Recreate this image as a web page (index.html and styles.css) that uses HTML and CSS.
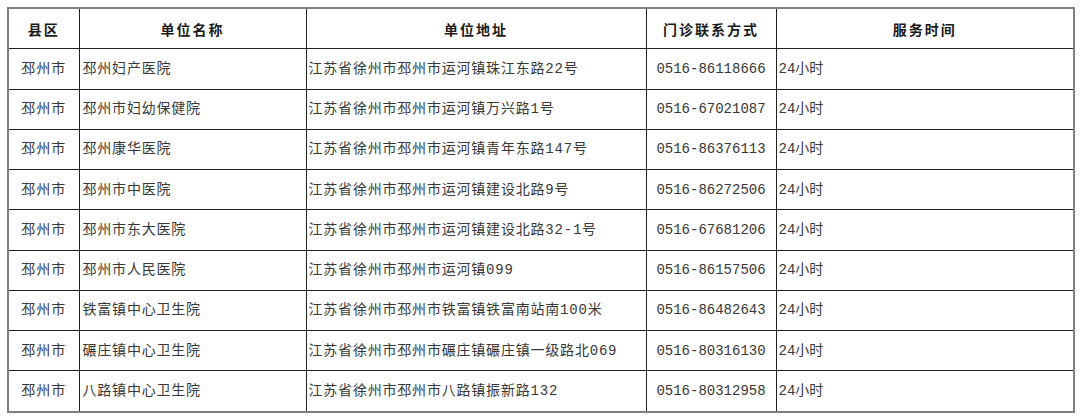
FILE: index.html
```html
<!DOCTYPE html>
<html lang="zh-CN">
<head>
<meta charset="utf-8">
<link rel="stylesheet" href="styles.css">
</head>
<body>
<table class="grid">
  <colgroup>
    <col class="c-county"><col class="c-name"><col class="c-addr"><col class="c-phone"><col class="c-time">
  </colgroup>
  <thead>
    <tr><th>县区</th><th>单位名称</th><th>单位地址</th><th>门诊联系方式</th><th>服务时间</th></tr>
  </thead>
  <tbody>
    <tr><td class="county">邳州市</td><td class="name">邳州妇产医院</td><td class="addr">江苏省徐州市邳州市运河镇珠江东路22号</td><td class="phone">0516-86118666</td><td class="time">24小时</td></tr>
    <tr><td class="county">邳州市</td><td class="name">邳州市妇幼保健院</td><td class="addr">江苏省徐州市邳州市运河镇万兴路1号</td><td class="phone">0516-67021087</td><td class="time">24小时</td></tr>
    <tr><td class="county">邳州市</td><td class="name">邳州康华医院</td><td class="addr">江苏省徐州市邳州市运河镇青年东路147号</td><td class="phone">0516-86376113</td><td class="time">24小时</td></tr>
    <tr><td class="county">邳州市</td><td class="name">邳州市中医院</td><td class="addr">江苏省徐州市邳州市运河镇建设北路9号</td><td class="phone">0516-86272506</td><td class="time">24小时</td></tr>
    <tr><td class="county">邳州市</td><td class="name">邳州市东大医院</td><td class="addr">江苏省徐州市邳州市运河镇建设北路32-1号</td><td class="phone">0516-67681206</td><td class="time">24小时</td></tr>
    <tr><td class="county">邳州市</td><td class="name">邳州市人民医院</td><td class="addr">江苏省徐州市邳州市运河镇099</td><td class="phone">0516-86157506</td><td class="time">24小时</td></tr>
    <tr><td class="county">邳州市</td><td class="name">铁富镇中心卫生院</td><td class="addr">江苏省徐州市邳州市铁富镇铁富南站南100米</td><td class="phone">0516-86482643</td><td class="time">24小时</td></tr>
    <tr><td class="county">邳州市</td><td class="name">碾庄镇中心卫生院</td><td class="addr">江苏省徐州市邳州市碾庄镇碾庄镇一级路北069</td><td class="phone">0516-80316130</td><td class="time">24小时</td></tr>
    <tr><td class="county">邳州市</td><td class="name">八路镇中心卫生院</td><td class="addr">江苏省徐州市邳州市八路镇振新路132</td><td class="phone">0516-80312958</td><td class="time">24小时</td></tr>
  </tbody>
</table>
</body>
</html>
```
FILE: styles.css
```css
html, body {
  margin: 0;
  padding: 0;
  background: #ffffff;
}
body {
  padding: 7px 0 0 7px;
  font-family: "Liberation Mono", "Noto Sans CJK SC", sans-serif;
  font-size: 14px;
  color: #383838;
}
.grid {
  border-collapse: collapse;
  table-layout: fixed;
  width: 1066px;
  border: 2px solid #808080;
}
.c-county { width: 71px; }
.c-name { width: 227px; }
.c-addr { width: 340px; }
.c-phone { width: 130px; }
.c-time { width: 298px; }
.grid th,
.grid td {
  border: 1px solid #222222;
  height: 39.25px;
  padding: 0;
  white-space: nowrap;
  vertical-align: middle;
  line-height: 20px;
}
.grid th {
  font-family: "Noto Sans CJK SC", sans-serif;
  font-weight: 700;
  color: #1a1a1a;
  letter-spacing: 2px;
  text-align: center;
}
.county {
  text-align: center;
  letter-spacing: 1px;
}
.name {
  padding-left: 3px !important;
  letter-spacing: 0.8px;
}
.addr {
  padding-left: 2px !important;
  letter-spacing: 0.8px;
}
.phone {
  text-align: center;
}
.time {
  padding-left: 2px !important;
}
```
